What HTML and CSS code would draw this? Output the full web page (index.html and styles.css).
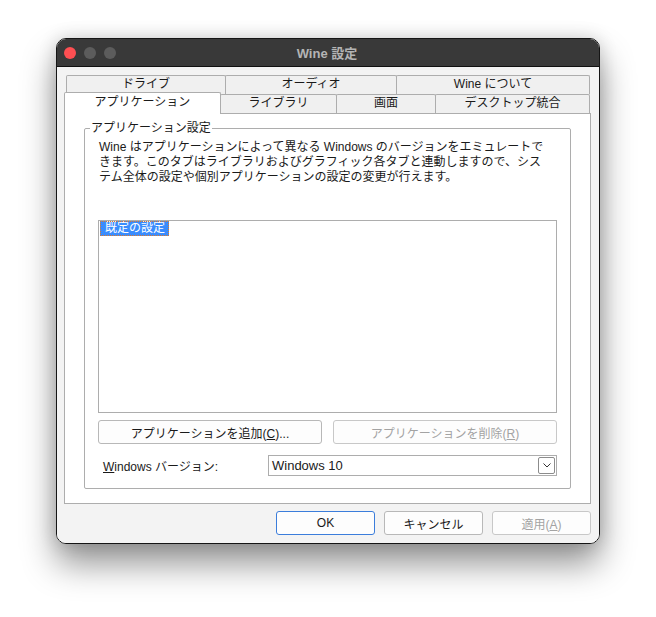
FILE: index.html
```html
<!DOCTYPE html>
<html lang="ja">
<head>
    <meta charset="UTF-8">
    <title>Wine 設定</title>
    <link rel="stylesheet" href="styles.css">
</head>
<body>
    <div class="window">
        <div class="titlebar">
            <div class="lights">
                <span class="light close"></span>
                <span class="light"></span>
                <span class="light"></span>
            </div>
            <div class="title">Wine 設定</div>
            <div></div>
        </div>

        <div class="client">
            <div class="tabs">
                <div class="tab-row back">
                    <div class="tab tab-drive">ドライブ</div>
                    <div class="tab tab-audio">オーディオ</div>
                    <div class="tab tab-about">Wine について</div>
                </div>
                <div class="tab-row front">
                    <div class="tab tab-apps active">アプリケーション</div>
                    <div class="tab tab-libs">ライブラリ</div>
                    <div class="tab tab-screen">画面</div>
                    <div class="tab tab-desktop">デスクトップ統合</div>
                </div>
            </div>

            <div class="panel">
                <fieldset class="group">
                    <legend>アプリケーション設定</legend>
                    <p class="desc">Wine はアプリケーションによって異なる Windows のバージョンをエミュレートで<br>きます。このタブはライブラリおよびグラフィック各タブと連動しますので、シス<br>テム全体の設定や個別アプリケーションの設定の変更が行えます。</p>

                    <div class="listbox">
                        <span class="item selected">既定の設定</span>
                    </div>

                    <div class="btn-row">
                        <button class="button">アプリケーションを追加(<u>C</u>)...</button>
                        <button class="button" disabled>アプリケーションを削除(<u>R</u>)</button>
                    </div>

                    <div class="version-row">
                        <label class="version-label"><u>W</u>indows バージョン:</label>
                        <div class="combo">
                            <span class="combo-value">Windows 10</span>
                            <span class="combo-drop">
                                <svg width="8" height="5" viewBox="0 0 8 5"><path d="M0.5 0.5 L4 4 L7.5 0.5" fill="none" stroke="#333" stroke-width="1"/></svg>
                            </span>
                        </div>
                    </div>
                </fieldset>
            </div>

            <div class="dialog-buttons">
                <button class="button default">OK</button>
                <button class="button">キャンセル</button>
                <button class="button" disabled>適用(<u>A</u>)</button>
            </div>
        </div>
    </div>
</body>
</html>
```

FILE: styles.css
```css
:root {
    --face: #f3f3f3;
    --line: #adadad;
    --text: #1a1a1a;
    --muted: #a3a3a3;
    --select: #3a8cfd;
}

* {
    margin: 0;
    padding: 0;
    box-sizing: border-box;
}

html {
    background-color: #ffffff;
}

body {
    min-height: 617px;
    font-family: "Liberation Sans", "Noto Sans CJK JP", sans-serif;
    font-size: 12px;
    color: var(--text);
    padding: 38px 56px 0;
}

.window {
    width: 544px;
    height: 506px;
    border: 1px solid #151515;
    border-radius: 10px;
    overflow: hidden;
    display: flex;
    flex-direction: column;
    box-shadow: 0 20px 34px rgba(0, 0, 0, 0.42), 0 0 18px rgba(0, 0, 0, 0.16);
}

/* title bar */
.titlebar {
    height: 28px;
    background-color: #393939;
    border-bottom: 1px solid #101010;
    display: grid;
    grid-template-columns: 1fr auto 1fr;
    align-items: center;
    flex-shrink: 0;
}

.lights {
    display: flex;
    gap: 8px;
    padding-left: 7px;
}

.light {
    width: 12px;
    height: 12px;
    border-radius: 50%;
    background-color: #5c5c5c;
}

.light.close {
    background-color: #fe4f52;
}

.title {
    font-weight: bold;
    font-size: 13px;
    color: #b4b4b4;
    margin-right: 2px;
}

.client {
    flex: 1;
    background-color: var(--face);
    padding: 8px 8px 0 7px;
    display: flex;
    flex-direction: column;
}

/* tabs */
.tab-row {
    display: flex;
    height: 19px;
}

.tab-row.back {
    padding: 0 1px 0 2px;
}

.tab-row.front {
    padding-right: 1px;
}

.tab {
    height: 19px;
    border: 1px solid var(--line);
    border-bottom: none;
    border-radius: 2px 2px 0 0;
    background-color: #f0f0f0;
    text-align: center;
    line-height: 17px;
    margin-right: -1px;
}

.tab-drive { width: 160px; }
.tab-audio { width: 172px; }
.tab-about { width: 194px; }
.tab-apps { width: 157px; }
.tab-libs { width: 117px; }
.tab-screen { width: 100px; }
.tab-desktop { width: 155px; }

.tab.active {
    position: relative;
    z-index: 1;
    height: 22px;
    margin-top: -2px;
    background-color: #ffffff;
    line-height: 19px;
}

/* page */
.panel {
    height: 391px;
    border: 1px solid var(--line);
    background-color: #ffffff;
    padding: 7px 19px 14px 19px;
}

.group {
    height: 100%;
    border: 1px solid var(--line);
    border-radius: 2px;
    padding: 4px 13px 12px 13px;
}

.group legend {
    margin-left: -8px;
    padding: 0 1px;
    line-height: 15px;
}

.desc {
    line-height: 15px;
    padding-left: 1px;
    margin-bottom: 35px;
    white-space: nowrap;
}

.listbox {
    height: 193px;
    border: 1px solid var(--line);
    background-color: #ffffff;
    padding: 0 1px;
}

.item {
    display: inline-block;
    height: 15px;
    line-height: 14px;
    padding: 0 4px 0 5px;
}

.item.selected {
    background-color: var(--select);
    color: #ffffff;
    outline: 1px dotted #e07a2a;
    outline-offset: -1px;
}

.btn-row {
    display: flex;
    justify-content: space-between;
    margin-top: 7px;
}

.button {
    height: 24px;
    border: 1px solid #b8b8b8;
    border-radius: 3px;
    background-color: #fdfdfd;
    font-family: inherit;
    font-size: 12px;
    color: var(--text);
}

.btn-row .button {
    width: 224px;
}

.button:disabled {
    color: var(--muted);
    border-color: #c8c8c8;
}

.version-row {
    display: flex;
    align-items: center;
    margin-top: 11px;
}

.version-label {
    width: 170px;
    padding-left: 5px;
}

.combo {
    flex: 1;
    height: 21px;
    border: 1px solid var(--line);
    background-color: #ffffff;
    display: flex;
    align-items: center;
    justify-content: space-between;
    padding: 0 1px 0 3px;
    font-size: 13px;
}

.combo-drop {
    width: 17px;
    height: 17px;
    border: 1px solid #8c8c8c;
    border-radius: 2px;
    display: flex;
    align-items: center;
    justify-content: center;
}

.dialog-buttons {
    display: flex;
    justify-content: flex-end;
    gap: 9px;
    margin-top: 7px;
}

.dialog-buttons .button {
    width: 99px;
}

.button.default {
    border-color: #3b7ddb;
}
```
